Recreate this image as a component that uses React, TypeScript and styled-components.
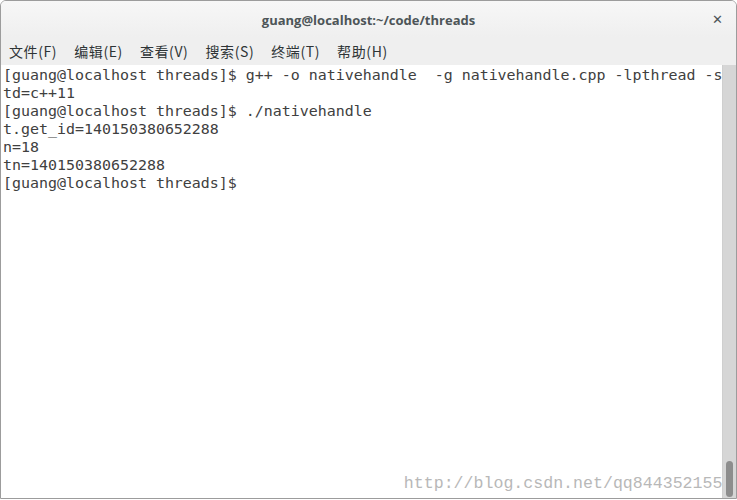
import React from "react";
import styled, { createGlobalStyle } from "styled-components";

const Global = createGlobalStyle`
  html, body { margin: 0; padding: 0; background: #ffffff; }
  #root { width: 737px; height: 500px; }
`;

const Window = styled.div`
  box-sizing: border-box;
  width: 737px;
  height: 499px;
  border: 1px solid #9c9c9c;
  border-radius: 6px 6px 0 0;
  display: flex;
  flex-direction: column;
  overflow: hidden;
  background: #ffffff;
`;

const TitleBar = styled.div`
  height: 36px;
  flex: none;
  display: grid;
  grid-template-columns: 1fr auto 1fr;
  align-items: center;
  background: linear-gradient(#f7f7f7, #efefef);
`;

const Title = styled.div`
  grid-column: 2;
  font-family: "Open Sans", "DejaVu Sans", sans-serif;
  font-weight: 700;
  font-size: 13px;
  color: #4d5558;
  padding-top: 1px;
`;

const Close = styled.div`
  grid-column: 3;
  justify-self: end;
  margin-right: 13px;
  font-family: "DejaVu Sans", sans-serif;
  font-weight: 700;
  font-size: 13px;
  color: #4d5558;
`;

const MenuBar = styled.div`
  height: 28px;
  flex: none;
  display: flex;
  align-items: center;
  gap: 17px;
  padding-left: 8px;
  background: #efefef;
`;

const MenuItem = styled.span`
  font-family: "Noto Sans CJK SC", "Noto Sans", sans-serif;
  font-size: 14px;
  letter-spacing: 0.6px;
  color: #2e3436;
`;

const Body = styled.div`
  flex: 1;
  display: flex;
  min-height: 0;
`;

const Terminal = styled.div`
  flex: 1;
  position: relative;
  padding: 1px 0 0 2px;
  background: #ffffff;
`;

const Line = styled.div`
  font-family: "DejaVu Sans Mono", monospace;
  font-size: 14.95px;
  line-height: 18px;
  height: 18px;
  white-space: pre;
  color: #404040;
`;

const Watermark = styled.div`
  position: absolute;
  right: 0px;
  bottom: 5px;
  font-family: "Liberation Mono", monospace;
  font-size: 16.6px;
  color: #b8b8b8;
`;

const Scrollbar = styled.div`
  width: 13px;
  flex: none;
  background: #d6d6d6;
  display: flex;
  flex-direction: column;
  justify-content: flex-end;
  align-items: center;
  padding-bottom: 1px;
  border-left: 1px solid #cfcfcf;
`;

const Thumb = styled.div`
  width: 7px;
  height: 36px;
  border-radius: 4px;
  background: #8d8d8d;
`;

const lines = [
  "[guang@localhost threads]$ g++ -o nativehandle  -g nativehandle.cpp -lpthread -s",
  "td=c++11",
  "[guang@localhost threads]$ ./nativehandle",
  "t.get_id=140150380652288",
  "n=18",
  "tn=140150380652288",
  "[guang@localhost threads]$ ",
];

const menus = ["文件(F)", "编辑(E)", "查看(V)", "搜索(S)", "终端(T)", "帮助(H)"];

export default function App() {
  return (
    <>
      <Global />
      <Window>
        <TitleBar>
          <Title>guang@localhost:~/code/threads</Title>
          <Close>✕</Close>
        </TitleBar>
        <MenuBar>
          {menus.map((m) => (
            <MenuItem key={m}>{m}</MenuItem>
          ))}
        </MenuBar>
        <Body>
          <Terminal>
            {lines.map((l, i) => (
              <Line key={i}>{l}</Line>
            ))}
            <Watermark>http://blog.csdn.net/qq844352155</Watermark>
          </Terminal>
          <Scrollbar>
            <Thumb />
          </Scrollbar>
        </Body>
      </Window>
    </>
  );
}
